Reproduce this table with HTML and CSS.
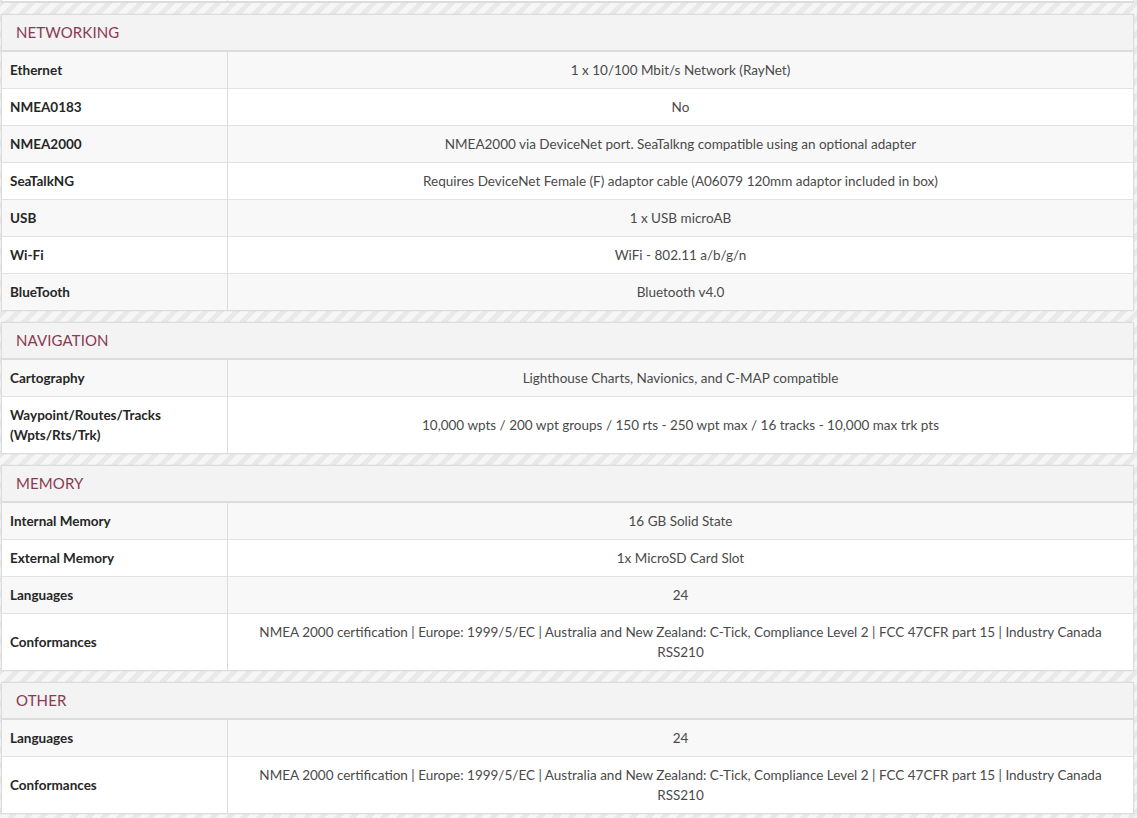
FILE: index.html
```html
<!DOCTYPE html>
<html>
<head>
<meta charset="utf-8">
<link rel="stylesheet" href="styles.css">
</head>
<body>
<div class="page">
  <div class="prev"><div class="prev-label"></div><div class="prev-value"></div></div>

  <section class="spec">
    <h2 class="spec-head">NETWORKING</h2>
    <div class="row odd"><div class="label">Ethernet</div><div class="value">1 x 10/100 Mbit/s Network (RayNet)</div></div>
    <div class="row"><div class="label">NMEA0183</div><div class="value">No</div></div>
    <div class="row odd"><div class="label">NMEA2000</div><div class="value">NMEA2000 via DeviceNet port. SeaTalkng compatible using an optional adapter</div></div>
    <div class="row"><div class="label">SeaTalkNG</div><div class="value">Requires DeviceNet Female (F) adaptor cable (A06079 120mm adaptor included in box)</div></div>
    <div class="row odd"><div class="label">USB</div><div class="value">1 x USB microAB</div></div>
    <div class="row"><div class="label">Wi-Fi</div><div class="value">WiFi - 802.11 a/b/g/n</div></div>
    <div class="row odd last"><div class="label">BlueTooth</div><div class="value">Bluetooth v4.0</div></div>
  </section>

  <section class="spec">
    <h2 class="spec-head">NAVIGATION</h2>
    <div class="row odd"><div class="label">Cartography</div><div class="value">Lighthouse Charts, Navionics, and C-MAP compatible</div></div>
    <div class="row tall last"><div class="label">Waypoint/Routes/Tracks (Wpts/Rts/Trk)</div><div class="value">10,000 wpts / 200 wpt groups / 150 rts - 250 wpt max / 16 tracks - 10,000 max trk pts</div></div>
  </section>

  <section class="spec">
    <h2 class="spec-head">MEMORY</h2>
    <div class="row odd"><div class="label">Internal Memory</div><div class="value">16 GB Solid State</div></div>
    <div class="row"><div class="label">External Memory</div><div class="value">1x MicroSD Card Slot</div></div>
    <div class="row odd"><div class="label">Languages</div><div class="value">24</div></div>
    <div class="row tall last"><div class="label">Conformances</div><div class="value">NMEA 2000 certification | Europe: 1999/5/EC | Australia and New Zealand: C-Tick, Compliance Level 2 | FCC 47CFR part 15 | Industry Canada RSS210</div></div>
  </section>

  <section class="spec">
    <h2 class="spec-head">OTHER</h2>
    <div class="row odd"><div class="label">Languages</div><div class="value">24</div></div>
    <div class="row tall last"><div class="label">Conformances</div><div class="value">NMEA 2000 certification | Europe: 1999/5/EC | Australia and New Zealand: C-Tick, Compliance Level 2 | FCC 47CFR part 15 | Industry Canada RSS210</div></div>
  </section>
</div>
</body>
</html>
```

FILE: styles.css
```css
html, body {
  margin: 0;
  padding: 0;
}
body {
  background: repeating-linear-gradient(135deg, #e9e9e9 0 5px, #f6f6f6 5px 11px);
  font-family: Lato, "Liberation Sans", sans-serif;
  font-size: 13.5px;
  color: #333;
  width: 1137px;
  height: 818px;
  overflow: hidden;
}
.page {
  display: flex;
  flex-direction: column;
  gap: 11px;
  padding: 0 3px 0 1px;
}
.prev {
  display: flex;
  height: 1px;
  background: #fff;
  border: 1px solid #dadada;
  border-top: none;
  border-bottom: 2px solid #dcdcdc;
}
.prev-label {
  width: 225px;
  border-right: 1px solid #ddd;
}
.spec {
  background: #fff;
  border: 1px solid #dcdcdc;
  box-shadow: 0 0 1px #d0d0d0;
}
.spec-head {
  margin: 0;
  height: 35px;
  line-height: 35px;
  padding-left: 14px;
  background: #f3f3f3;
  border-bottom: 2px solid #dcdcdc;
  color: #8a3a52;
  font-size: 15px;
  font-weight: 400;
  letter-spacing: 0.1px;
}
.row {
  display: flex;
  min-height: 36px;
  border-bottom: 1px solid #e2e2e2;
  background: #fff;
}
.row.odd {
  background: #f8f8f8;
}
.row.last {
  border-bottom: none;
}
.row.tall {
  min-height: 56px;
}
.label {
  width: 217px;
  flex: none;
  padding: 0 0 0 8px;
  display: flex;
  align-items: center;
  border-right: 1px solid #dcdcdc;
  font-weight: 700;
  color: #262626;
  line-height: 20px;
}
.value {
  flex: 1;
  display: flex;
  align-items: center;
  justify-content: center;
  text-align: center;
  padding: 0 22px;
  color: #4a4a4a;
  line-height: 20px;
}
```
